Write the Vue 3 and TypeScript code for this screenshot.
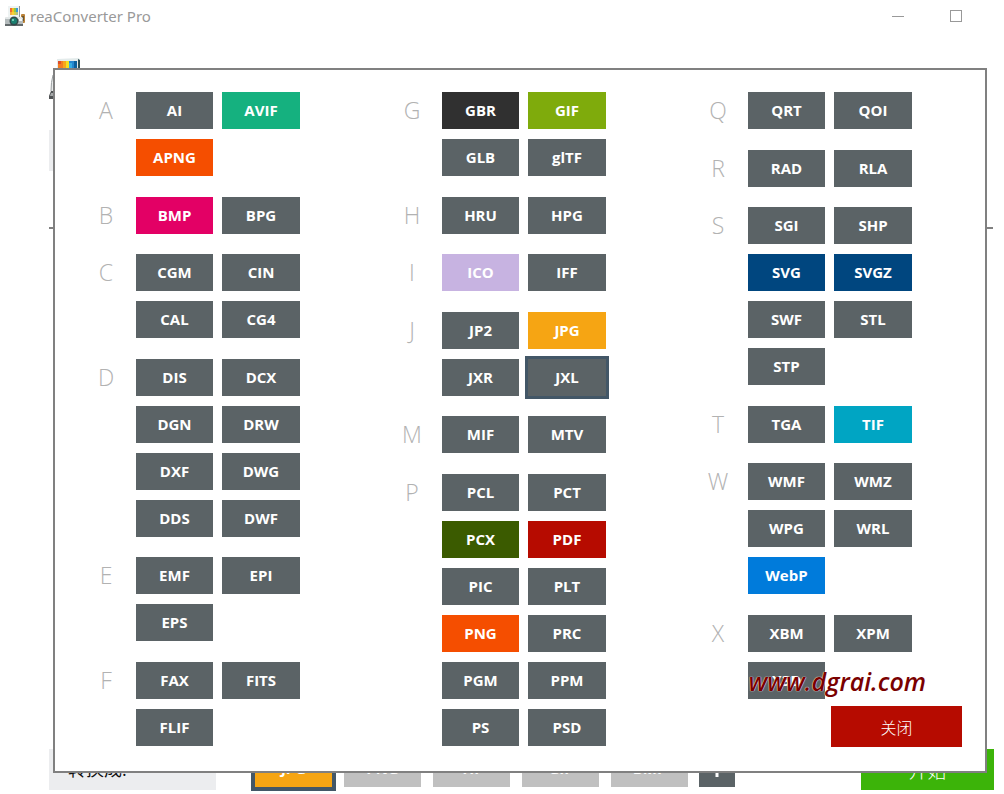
<script setup lang="ts">
import { ref } from 'vue'

interface Format {
  name: string
  tone?: string
}

interface Group {
  letter: string
  formats: Format[]
}

const tones: Record<string, string> = {
  AVIF: 'green', APNG: 'orange', BMP: 'pink', GBR: 'black', GIF: 'lime', ICO: 'lilac',
  JPG: 'amber', PCX: 'olive', PDF: 'red', PNG: 'orange', SVG: 'navy', SVGZ: 'navy',
  TIF: 'cyan', WebP: 'blue',
}

const group = (letter: string, names: string): Group => ({
  letter,
  formats: names.split(' ').map((name) => ({ name, tone: tones[name] })),
})

const columns: Group[][] = [
  [
    group('A', 'AI AVIF APNG'),
    group('B', 'BMP BPG'),
    group('C', 'CGM CIN CAL CG4'),
    group('D', 'DIS DCX DGN DRW DXF DWG DDS DWF'),
    group('E', 'EMF EPI EPS'),
    group('F', 'FAX FITS FLIF'),
  ],
  [
    group('G', 'GBR GIF GLB glTF'),
    group('H', 'HRU HPG'),
    group('I', 'ICO IFF'),
    group('J', 'JP2 JPG JXR JXL'),
    group('M', 'MIF MTV'),
    group('P', 'PCL PCT PCX PDF PIC PLT PNG PRC PGM PPM PS PSD'),
  ],
  [
    group('Q', 'QRT QOI'),
    group('R', 'RAD RLA'),
    group('S', 'SGI SHP SVG SVGZ SWF STL STP'),
    group('T', 'TGA TIF'),
    group('W', 'WMF WMZ WPG WRL WebP'),
    group('X', 'XBM XPM X3D'),
  ],
]

const recent = ['JPG', 'PNG', 'TIF', 'GIF', 'BMP']
const selected = ref('JXL')
const target = ref('JPG')
const open = ref(true)
</script>

<template>
  <div class="window">
    <header class="titlebar">
      <svg class="app-icon" viewBox="0 0 20 20" aria-hidden="true">
        <rect x="3" y="0" width="12" height="12" fill="#8f989b" />
        <rect x="3" y="0" width="11" height="11" fill="#eef3f3" />
        <rect x="5" y="2" width="3" height="7" fill="#ee6b34" />
        <rect x="7" y="2" width="2" height="7" fill="#f6c11d" />
        <rect x="9" y="2" width="2" height="7" fill="#8cc84a" />
        <rect x="11" y="2" width="2" height="7" fill="#3b9ad6" />
        <rect x="5" y="6" width="8" height="3" fill="#ffd84a" opacity="0.600" />
        <rect x="16" y="8" width="4" height="9" rx="1" fill="#b98239" />
        <rect x="17" y="10" width="2" height="5" fill="#6a5632" />
        <path d="M1 11h16l1 2v6H0v-6z" fill="#b4bbbc" />
        <path d="M1 11h16l1 2H0z" fill="#e3e8e8" />
        <path d="M0 18h18v2H0z" fill="#62696b" />
        <rect x="14" y="13" width="3" height="2" fill="#f5f7f7" />
        <circle cx="9" cy="15" r="4.500" fill="#33484a" />
        <circle cx="9" cy="15" r="3" fill="#1b7f70" />
        <circle cx="8" cy="14" r="1" fill="#8ce0ca" />
      </svg>
      <h1>reaConverter Pro</h1>
      <div class="window-controls">
        <button type="button" aria-label="Minimize"><span class="minimize"></span></button>
        <button type="button" aria-label="Maximize"><span class="maximize"></span></button>
      </div>
    </header>

    <main class="workspace">
      <svg class="logo" viewBox="0 0 44 44" aria-hidden="true">
        <path d="M8 1l22-1 1 3v18H8z" fill="#e3ebeb" />
        <path d="M29 1l2 1v18h-2z" fill="#2d5056" />
        <rect x="9" y="3" width="19" height="16" fill="#2387cf" />
        <rect x="9" y="3" width="8" height="16" fill="#f47d20" />
        <rect x="9" y="3" width="3" height="3" fill="#df4e29" />
        <rect x="14" y="3" width="3" height="16" fill="#f8a51b" />
        <rect x="17" y="3" width="3" height="16" fill="#f5df20" />
        <rect x="20" y="5" width="3" height="14" fill="#35ade1" />
        <rect x="25" y="3" width="3" height="16" fill="#0a609c" />
        <path d="M4 17Q2 24 2 33l-2 5v3h40V17z" fill="#e8eaea" />
        <path d="M4 17Q2 24 2 33" fill="none" stroke="#9a9fa1" />
        <path d="M2 33l-2 5v3h8v-8z" fill="#505355" />
        <path d="M2 35h3v3H1z" fill="#a6a9aa" />
      </svg>
      <div class="toolbar"></div>
      <hr />
    </main>

    <footer class="convert-bar">
      <div class="convert-label">转换成:</div>
      <div class="recent">
        <button
          v-for="name in recent"
          :key="name"
          type="button"
          class="tile recent-tile"
          :class="name === target ? 'amber chosen' : 'muted'"
          @click="target = name"
        >{{ name }}</button>
        <button type="button" class="tile more" aria-label="More formats" @click="open = true">
          <svg viewBox="0 0 16 16" aria-hidden="true"><path d="M0 6.500h6.500V0h3v6.500H16v3H9.500V16h-3V9.500H0z" fill="#fff" /></svg>
        </button>
      </div>
      <button type="button" class="start">开始</button>
    </footer>

    <section v-if="open" class="dialog" role="dialog" aria-label="Formats">
      <div v-for="(column, index) in columns" :key="index" class="column">
        <div v-for="item in column" :key="item.letter" class="group">
          <h2>{{ item.letter }}</h2>
          <div class="tiles">
            <button
              v-for="format in item.formats"
              :key="format.name"
              type="button"
              class="tile"
              :class="[format.tone, { selected: format.name === selected }]"
              @click="selected = format.name"
            >{{ format.name }}</button>
          </div>
        </div>
        <button v-if="index === columns.length - 1" type="button" class="close" @click="open = false">关闭</button>
        <span v-if="index === columns.length - 1" class="watermark">www.dgrai.com</span>
      </div>
    </section>
  </div>
</template>

<style>
body {
  margin: 0;
  background: #fff;
}
</style>

<style scoped>
.window {
  position: relative;
  display: flex;
  flex-direction: column;
  box-sizing: border-box;
  min-height: 100vh;
  padding-bottom: 4px;
  overflow: hidden;
  background: #fff;
  font-family: "Open Sans", "Noto Sans", "Noto Sans CJK SC", sans-serif;
}

button {
  border: 0;
  padding: 0;
  font-family: inherit;
  cursor: pointer;
}

.titlebar {
  display: flex;
  align-items: center;
  height: 32px;
  padding: 0 19px 0 5px;
}

.app-icon {
  width: 20px;
  height: 20px;
}

h1 {
  margin: 0 auto 0 5px;
  color: #999;
  font-family: "Noto Sans", sans-serif;
  font-size: 15px;
  font-weight: 400;
  line-height: 20px;
}

.window-controls {
  display: flex;
}

.window-controls button {
  display: grid;
  place-items: center;
  width: 58px;
  height: 32px;
  background: none;
}

.minimize {
  width: 12px;
  height: 1px;
  background: #999;
}

.maximize {
  box-sizing: border-box;
  width: 12px;
  height: 12px;
  border: 1px solid #999;
}

.workspace {
  display: flex;
  flex: 1;
  flex-direction: column;
  padding: 26px 11px 0 49px;
}

.logo {
  width: 44px;
  height: 44px;
}

.toolbar {
  height: 41px;
  margin: 28px 0 56px;
  background: linear-gradient(to right, #ecedef 167px, #fff 167px);
}

hr {
  width: 100%;
  margin: 0;
  border: 0;
  border-top: 2px solid #808080;
}

.convert-bar {
  display: flex;
  align-items: flex-start;
  padding: 0 10px 0 49px;
}

.convert-label {
  box-sizing: border-box;
  width: 167px;
  height: 41px;
  padding-left: 19px;
  background: #ecedef;
  color: #111;
  font-size: 18px;
  line-height: 40px;
}

.recent {
  display: flex;
  gap: 12px;
  margin: 1px auto 0 39px;
}

.tile {
  height: 37px;
  background: #5b6366;
  color: #fff;
  font-size: 15px;
  font-weight: 700;
  line-height: 37px;
  text-align: center;
}

.recent-tile {
  width: 77px;
}

.more {
  width: 36px;
  margin-left: -1px;
}

.more svg {
  display: block;
  width: 16px;
  height: 16px;
  margin: 0 auto;
}

.start {
  width: 133px;
  height: 41px;
  background: #3cb409;
  color: #fff;
  font-size: 19px;
  font-weight: 300;
}

.dialog {
  position: absolute;
  top: 68px;
  right: 17px;
  left: 53px;
  display: flex;
  justify-content: space-between;
  box-sizing: border-box;
  border: 2px solid #808080;
  padding: 22px 73px 24px 36px;
  background: #fff;
}

.column {
  position: relative;
}

.group {
  display: flex;
  gap: 15px;
  margin-bottom: 20px;
}

.group:nth-child(odd) {
  margin-bottom: 21px;
}

.group:nth-child(6) {
  margin-bottom: 0;
}

h2 {
  width: 30px;
  margin: 0;
  color: #b2b2b2;
  font-size: 23px;
  font-weight: 300;
  line-height: 36px;
  text-align: center;
}

.tiles {
  display: grid;
  grid-template-columns: 77px 78px;
  gap: 10px 9px;
}

.green { background: #15b17f; }
.orange { background: #f54e00; }
.pink { background: #e30065; }
.black { background: #303030; }
.lime { background: #7fab0c; }
.lilac { background: #c7b3e1; }
.amber { background: #f6a513; }
.olive { background: #3b5b00; }
.red { background: #b60b00; }
.navy { background: #00467f; }
.cyan { background: #00a5c3; }
.blue { background: #007bdb; }
.muted { background: #c0c0c0; }
.selected { box-shadow: 0 0 0 3px #435767; }
.chosen { box-shadow: 0 0 0 4px #435767; }

.close {
  display: block;
  width: 131px;
  height: 41px;
  margin: 7px -50px 0 auto;
  background: #b60b00;
  color: #fff;
  font-size: 16px;
  font-weight: 300;
}

.watermark {
  position: absolute;
  right: -14px;
  bottom: 50px;
  color: #7a0000;
  font-size: 25px;
  font-style: italic;
  font-weight: 600;
  line-height: 32px;
  text-shadow: 0 0 1px #fff, 0 0 1px #fff;
  pointer-events: none;
}
</style>
